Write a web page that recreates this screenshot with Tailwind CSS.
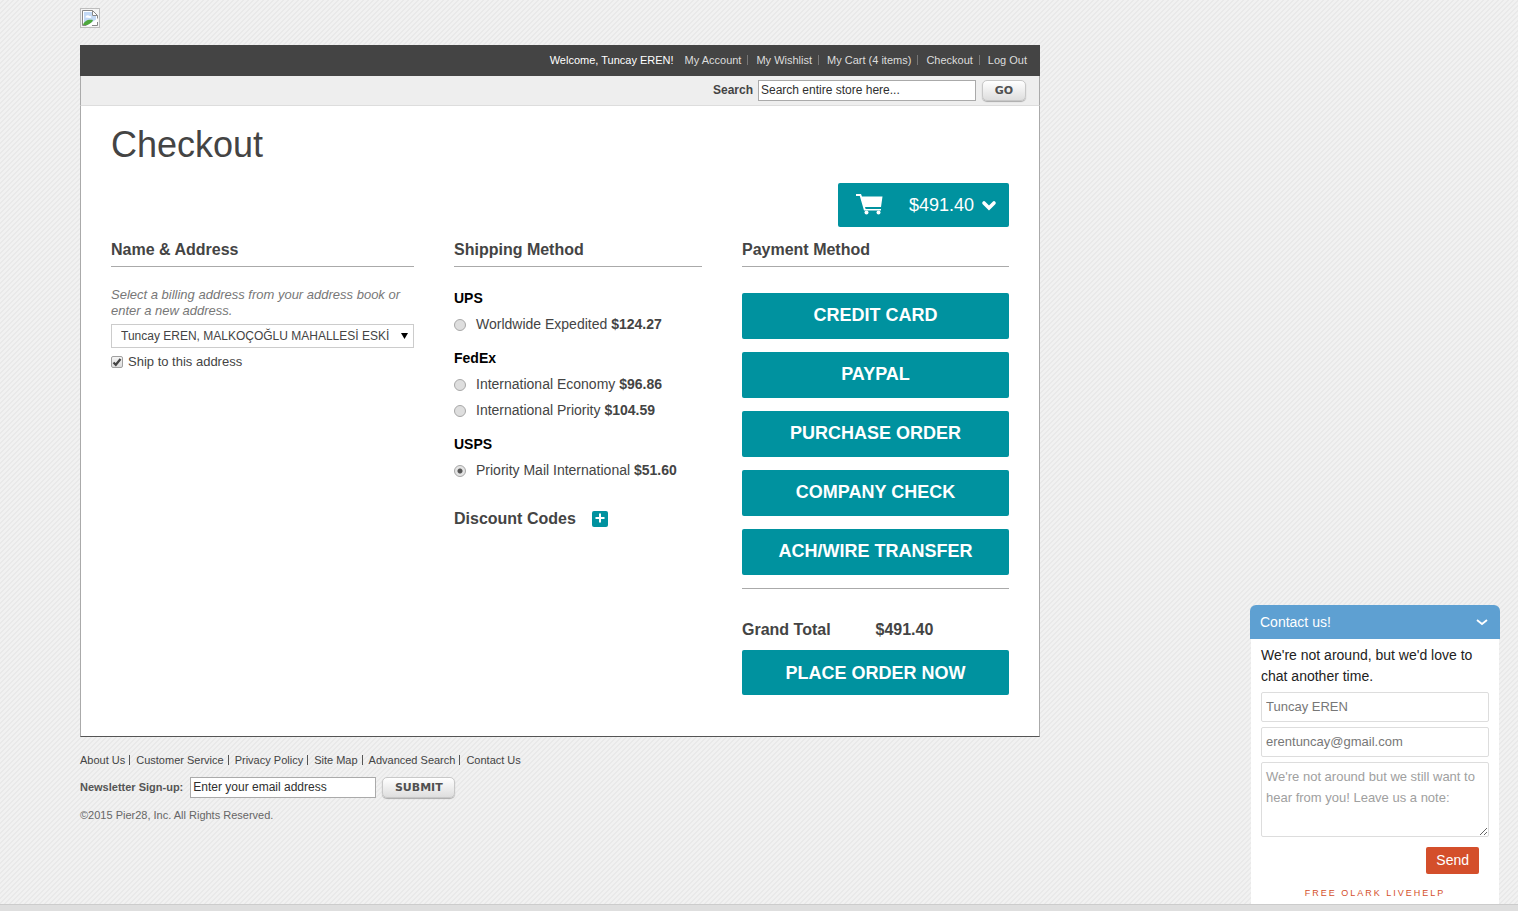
<!DOCTYPE html>
<html lang="en">
<head>
<meta charset="utf-8">
<meta name="viewport" content="width=device-width, initial-scale=1">
<title>Checkout</title>
<script src="https://cdn.jsdelivr.net/npm/@tailwindcss/browser@4"></script>
</head>
<body class="min-h-screen bg-[#eeeeee] bg-[linear-gradient(135deg,#f1f1f1_25%,#e9e9e9_25%,#e9e9e9_50%,#f1f1f1_50%,#f1f1f1_75%,#e9e9e9_75%)] bg-[length:5px_5px] font-['Liberation_Sans',Arial,sans-serif] text-[#444444]">

<div class="ml-20 max-w-[960px] pt-2 pb-16">
  <!-- logo placeholder -->
  <a href="#" aria-label="Home" class="block w-5">
    <svg class="size-5" viewBox="0 0 20 20" fill="none">
      <rect x=".5" y=".5" width="19" height="19" fill="#f4f4f4" stroke="#bdbdbd"/>
      <path d="M2.5 17.5v-15h10l5 5v10z" fill="#fff"/>
      <path d="M4 4h8v4h4v5l-4 3H4z" fill="#c3d9f5"/>
      <path d="M5.5 9.500c0-2 2.500-3 4-1.500 2-.5 2.500 1.500 1 2z" fill="#fff"/>
      <path d="M3 17c1-4 5-6 10-5-1 3-3 5-6 5z" fill="#4fa83d"/>
      <path d="M2.500 17.500v-15h10l5 5M12.500 2.500v5h5v3M2.500 17.500h4M12 17.500h5.500V14" stroke="#888"/>
      <path d="M8 18l9-6" stroke="#fff" stroke-width="2"/>
    </svg>
  </a>

  <header class="mt-[17px]">
    <nav class="flex h-[31px] items-center justify-end bg-[#444444] pr-[13px] text-[11px] text-[#dddddd]" aria-label="Account">
      <p class="mr-[11px] text-white">Welcome, Tuncay EREN!</p>
      <ul class="mb-0.5 flex items-center gap-2 leading-[10px]">
        <li class="border-r border-[#777777] pr-1.5"><a href="#">My Account</a></li>
        <li class="border-r border-[#777777] pr-1.5"><a href="#">My Wishlist</a></li>
        <li class="border-r border-[#777777] pr-1.5"><a href="#">My Cart (4 items)</a></li>
        <li class="border-r border-[#777777] pr-1.5"><a href="#">Checkout</a></li>
        <li><a href="#">Log Out</a></li>
      </ul>
    </nav>
    <form class="flex h-[30px] items-center justify-end border border-t-0 border-[#aaaaaa] border-b-[#dddddd] bg-[#eeeeee] pr-[13px] text-xs" onsubmit="return false">
      <label for="search" class="mr-[5px] pb-0.5 font-bold">Search</label>
      <input id="search" type="text" value="Search entire store here..." class="h-[21px] w-[218px] border border-[#aaaaaa] bg-white px-0.5 pb-0.5 text-[#2f2f2f]">
      <button class="ml-1.5 h-[21px] w-11 rounded-[5px] border border-[#c8c8c8] bg-linear-to-b from-white to-[#dedede] font-['DejaVu_Sans',Verdana,sans-serif] text-[11px] leading-none font-bold text-[#505050] shadow-[0_1px_1px_#aaaaaa]">GO</button>
    </form>
  </header>

  <main class="border border-t-0 border-[#aaaaaa] border-b-[#555555] bg-white px-[30px] pt-[19px] pb-[41px]">
    <h1 class="text-4xl leading-10">Checkout</h1>
    <div class="mt-[18px] flex justify-end">
      <button class="flex h-11 items-center rounded-xs bg-[#00929f] pr-3 pl-[18px] text-lg text-white">
        <svg class="mr-[26px] mb-0.5 h-[21px] w-[27px]" viewBox="0 0 27 21" fill="currentColor" aria-hidden="true">
          <path d="M0 0h5l1 2.500h20.500l-1.500 10.500H9l.6 2H25v1.500H8L3.800 2H0z"/>
          <circle cx="10.500" cy="18.500" r="2"/><circle cx="22.500" cy="18.500" r="2"/>
        </svg>
        <span>$491.40</span>
        <svg class="ml-[7px] h-4 w-4" viewBox="0 0 16 16" fill="none" stroke="currentColor" stroke-width="3.600" stroke-linecap="round" aria-hidden="true"><path d="M3 6l5 5 5-5"/></svg>
      </button>
    </div>

    <form class="mt-3 grid grid-cols-[303fr_248fr_267fr] gap-10" onsubmit="return false">
      <section class="min-w-0">
        <h2 class="border-b border-[#aaaaaa] pb-[5px] leading-[22px] font-bold">Name &amp; Address</h2>
        <label for="address" class="mt-5 block text-[13px] leading-4 text-[#777777] italic">Select a billing address from your address book or enter a new address.</label>
        <div class="relative mt-[5px]">
          <select id="address" class="block h-6 w-full appearance-none border border-[#cccccc] bg-white pr-5 pl-[9px] text-xs text-[#444444]">
            <option>Tuncay EREN, MALKOÇOĞLU MAHALLESİ ESKİ</option>
          </select>
          <svg class="pointer-events-none absolute top-[9px] right-1.5 h-1.5 w-[7px]" viewBox="0 0 7 6" fill="#000" aria-hidden="true"><path d="M0 0h7L3.500 6z"/></svg>
        </div>
        <label class="mt-1.5 flex items-center gap-[5px] text-[13px] leading-4">
          <span class="relative size-3">
            <input type="checkbox" checked class="block size-3 appearance-none rounded-xs border border-[#a0a0a0] bg-linear-to-b from-[#f4f4f4] to-[#dddddd]">
            <svg class="pointer-events-none absolute inset-0 size-3" viewBox="0 0 12 12" fill="none" stroke="#444" stroke-width="2.200" aria-hidden="true"><path d="M2.500 6.500l2.300 2.300L9.500 3"/></svg>
          </span>
          Ship to this address
        </label>
      </section>

      <section class="min-w-0">
        <h2 class="border-b border-[#aaaaaa] pb-[5px] leading-[22px] font-bold">Shipping Method</h2>
        <div class="mt-[18px] flex flex-col gap-2 text-sm leading-[26px]">
          <fieldset>
            <legend class="font-bold text-black">UPS</legend>
            <label class="flex items-center"><input type="radio" name="ship" class="mt-0.5 mr-2.5 size-3 appearance-none rounded-full border border-[#a8a8a8] bg-[#dedede] checked:bg-[radial-gradient(circle,#555555_2px,#e4e4e4_3px)]"><span>Worldwide Expedited <b>$124.27</b></span></label>
          </fieldset>
          <fieldset>
            <legend class="font-bold text-black">FedEx</legend>
            <label class="flex items-center"><input type="radio" name="ship" class="mt-0.5 mr-2.5 size-3 appearance-none rounded-full border border-[#a8a8a8] bg-[#dedede] checked:bg-[radial-gradient(circle,#555555_2px,#e4e4e4_3px)]"><span>International Economy <b>$96.86</b></span></label>
            <label class="flex items-center"><input type="radio" name="ship" class="mt-0.5 mr-2.5 size-3 appearance-none rounded-full border border-[#a8a8a8] bg-[#dedede] checked:bg-[radial-gradient(circle,#555555_2px,#e4e4e4_3px)]"><span>International Priority <b>$104.59</b></span></label>
          </fieldset>
          <fieldset>
            <legend class="font-bold text-black">USPS</legend>
            <label class="flex items-center"><input type="radio" name="ship" checked class="mt-0.5 mr-2.5 size-3 appearance-none rounded-full border border-[#a8a8a8] bg-[#dedede] checked:bg-[radial-gradient(circle,#555555_2px,#e4e4e4_3px)]"><span>Priority Mail International <b>$51.60</b></span></label>
          </fieldset>
        </div>
        <div class="mt-6 flex items-center gap-4 leading-6 font-bold">
          <h3>Discount Codes</h3>
          <button aria-label="Add discount code" class="flex size-4 justify-center rounded-xs bg-[#00929f] pt-0.5 text-white">
            <svg class="size-2.5" viewBox="0 0 10 10" fill="none" stroke="currentColor" stroke-width="2" aria-hidden="true"><path d="M5 .5v9M.5 5h9"/></svg>
          </button>
        </div>
      </section>

      <section class="min-w-0">
        <h2 class="border-b border-[#aaaaaa] pb-[5px] leading-[22px] font-bold">Payment Method</h2>
        <div class="mt-[26px] flex flex-col gap-[13px] border-b border-[#aaaaaa] pb-[13px] text-lg font-bold text-white">
          <button class="h-[46px] rounded-xs bg-[#00929f] pb-0.5">CREDIT CARD</button>
          <button class="h-[46px] rounded-xs bg-[#00929f] pb-0.5">PAYPAL</button>
          <button class="h-[46px] rounded-xs bg-[#00929f] pb-0.5">PURCHASE ORDER</button>
          <button class="h-[46px] rounded-xs bg-[#00929f] pb-0.5">COMPANY CHECK</button>
          <button class="h-[46px] rounded-xs bg-[#00929f] pb-0.5">ACH/WIRE TRANSFER</button>
        </div>
        <p class="mt-[30px] grid grid-cols-2 leading-[22px] font-bold"><span>Grand Total</span><span>$491.40</span></p>
        <button class="mt-[9px] h-[45px] w-full rounded-xs bg-[#00929f] text-lg font-bold text-white">PLACE ORDER NOW</button>
      </section>
    </form>
  </main>

  <footer class="mt-[15px] text-[11px] leading-4">
    <ul class="flex items-center gap-1.5">
      <li class="flex items-center gap-1"><a href="#">About Us</a><span class="h-2.5 w-px bg-[#555555]"></span></li>
      <li class="flex items-center gap-1"><a href="#">Customer Service</a><span class="h-2.5 w-px bg-[#555555]"></span></li>
      <li class="flex items-center gap-1"><a href="#">Privacy Policy</a><span class="h-2.5 w-px bg-[#555555]"></span></li>
      <li class="flex items-center gap-1"><a href="#">Site Map</a><span class="h-2.5 w-px bg-[#555555]"></span></li>
      <li class="flex items-center gap-1"><a href="#">Advanced Search</a><span class="h-2.5 w-px bg-[#555555]"></span></li>
      <li><a href="#">Contact Us</a></li>
    </ul>
    <form class="mt-[9px] flex items-center" onsubmit="return false">
      <label for="newsletter" class="mr-[7px] pb-0.5 font-bold text-[#555555]">Newsletter Sign-up:</label>
      <input id="newsletter" type="text" value="Enter your email address" class="h-[21px] w-[186px] border border-[#aaaaaa] bg-white px-0.5 pb-0.5 text-xs text-[#2f2f2f]">
      <button class="ml-1.5 h-[21px] w-[73px] rounded-[5px] border border-[#c8c8c8] bg-linear-to-b from-white to-[#dedede] font-['DejaVu_Sans',Verdana,sans-serif] text-[11px] leading-none font-bold text-[#505050] shadow-[0_1px_1px_#aaaaaa]">SUBMIT</button>
    </form>
    <p class="mt-[9px] text-[#666666]">©2015 Pier28, Inc. All Rights Reserved.</p>
  </footer>
</div>

<!-- chat box docked to the bottom right corner -->
<aside class="fixed right-[18px] bottom-[7px] w-[250px] text-sm">
  <button class="flex h-[34px] w-full items-center justify-between rounded-t-md bg-[#5ea0d2] pr-3 pl-2.5 text-white">
    Contact us!
    <svg class="h-3 w-3" viewBox="0 0 12 12" fill="none" stroke="currentColor" stroke-width="1.800" aria-hidden="true"><path d="M1 4l5 4 5-4"/></svg>
  </button>
  <form class="mx-px flex flex-col gap-[5px] bg-white px-2.5 pt-1.5 pb-[3px]" onsubmit="return false">
    <p class="leading-[21px] text-[#222222]">We're not around, but we'd love to chat another time.</p>
    <input type="text" aria-label="Name" value="Tuncay EREN" class="h-[30px] w-full rounded-xs border border-[#dddddd] px-1 pb-0.5 text-[13px] text-[#777777]">
    <input type="email" aria-label="Email" value="erentuncay@gmail.com" class="h-[30px] w-full rounded-xs border border-[#dddddd] px-1 pb-0.5 text-[13px] text-[#777777]">
    <textarea aria-label="Message" placeholder="We're not around but we still want to hear from you! Leave us a note:" class="h-[75px] w-full resize overflow-hidden rounded-xs border border-[#dddddd] px-1 pt-[3px] text-[13px] leading-[21px] placeholder:text-[#a0a0a0]"></textarea>
    <button class="mt-[5px] mr-2.5 h-[27px] self-end rounded-xs bg-[#d44f2b] px-2.5 pb-0.5 text-white">Send</button>
    <a href="#" class="mt-1.5 text-center text-[9px] leading-4 tracking-[2px] text-[#d44f2b]">FREE OLARK LIVEHELP</a>
  </form>
</aside>
<div class="fixed inset-x-0 bottom-0 h-[7px] border-t border-[#cccccc] bg-[#dedede]"></div>

</body>
</html>
